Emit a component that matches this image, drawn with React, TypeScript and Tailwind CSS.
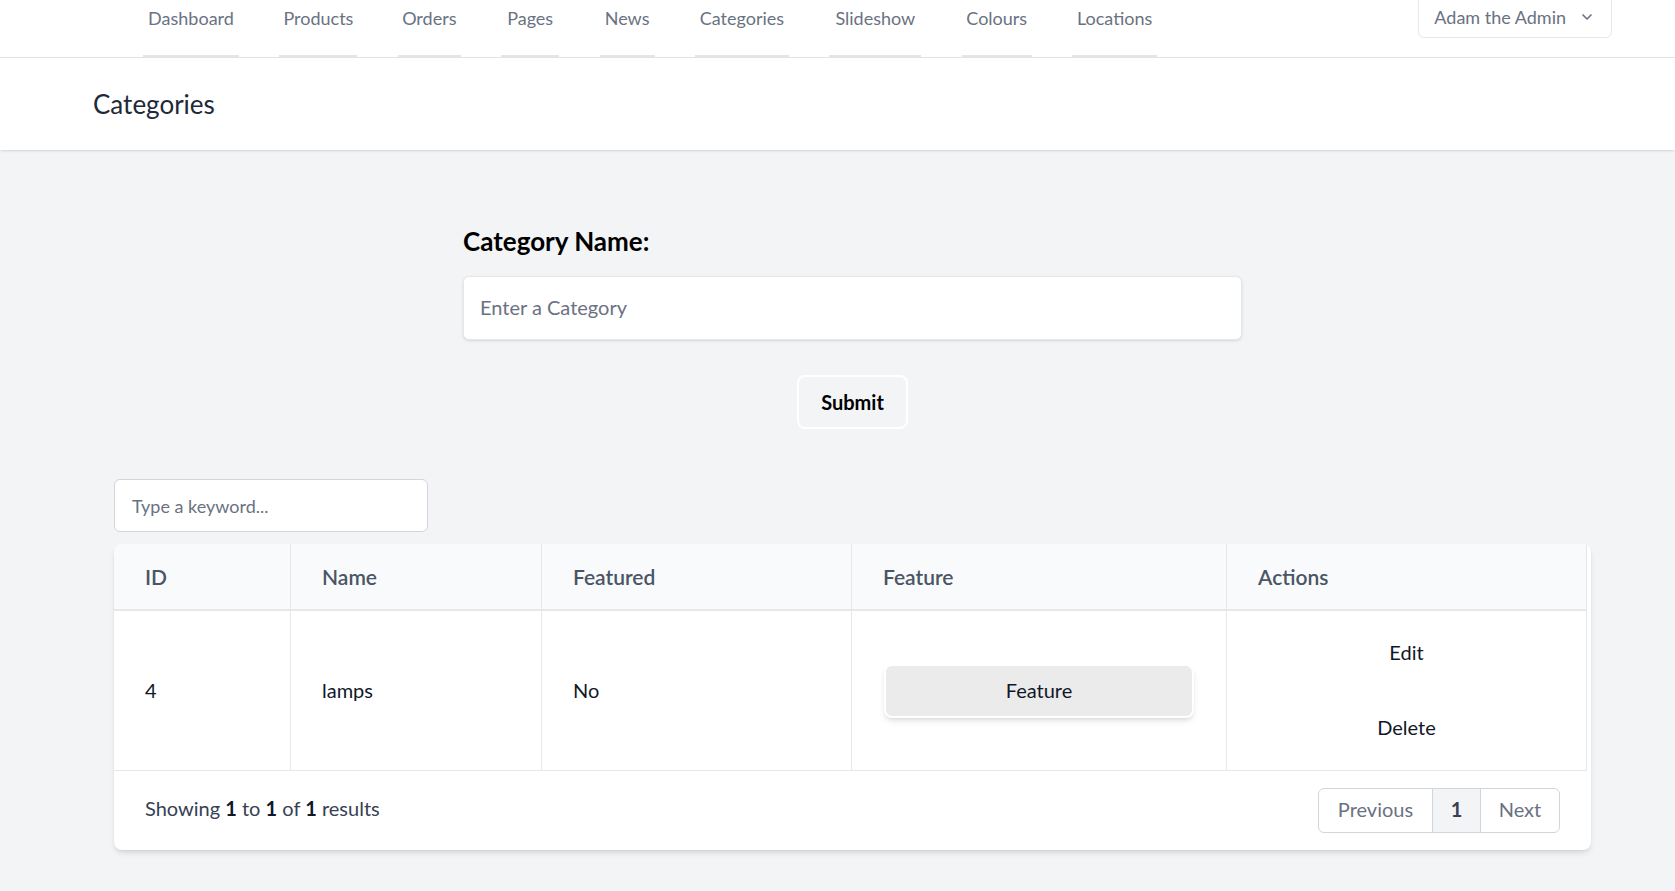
import React from 'react';
import { ChevronDown } from 'lucide-react';

const navItems = [
  { name: 'Dashboard', width: 'w-[96px]' },
  { name: 'Products', width: 'w-[78px]' },
  { name: 'Orders', width: 'w-[63px]' },
  { name: 'Pages', width: 'w-[58px]' },
  { name: 'News', width: 'w-[55px]' },
  { name: 'Categories', width: 'w-[94px]' },
  { name: 'Slideshow', width: 'w-[92px]' },
  { name: 'Colours', width: 'w-[70px]' },
  { name: 'Locations', width: 'w-[85px]' },
];

const TopNav = () => (
  <nav className="flex h-[58px] border-b border-gray-200 bg-white">
    <div className="flex gap-[40.4px] pl-[143px]">
      {navItems.map(({ name, width }) => (
        <a
          key={name}
          href="#"
          className={`${width} flex h-full justify-center border-b-2 border-[#e5e5e5] pt-[5px] text-[18px] leading-[27px] text-gray-500`}
        >
          {name}
        </a>
      ))}
    </div>
    <div className="ml-auto mr-[63px]">
      <button className="-mt-[8px] flex h-[46px] items-center gap-[13px] rounded-md border border-gray-200 bg-white pl-[15px] pr-[16px] pt-[4px] text-[18px] text-gray-500">
        Adam the Admin
        <ChevronDown className="h-[16px] w-[16px]" strokeWidth={2.5} />
      </button>
    </div>
  </nav>
);

const Header = () => (
  <header className="flex h-[92px] items-center bg-white pl-[93px] shadow">
    <h2 className="text-[26px] text-gray-800">Categories</h2>
  </header>
);

const CategoryForm = () => (
  <form className="mx-auto w-[779px]">
    <label className="mt-[76px] block text-[26px] font-bold leading-[30px] text-black">Category Name:</label>
    <input
      type="text"
      placeholder="Enter a Category"
      className="mt-[20px] block h-[64px] w-full rounded-md border border-gray-200 bg-white px-[16px] pb-[3px] text-[20px] shadow-sm placeholder:text-gray-500 focus:outline-none"
    />
    <button
      type="button"
      className="mx-auto mt-[35px] block h-[54px] w-[111px] rounded-lg border-2 border-white bg-[#f3f4f6] text-[20px] font-bold text-black"
    >
      Submit
    </button>
  </form>
);

const CategoryTable = () => {
  const cols = 'grid grid-cols-[177px_251px_310px_375px_1fr]';
  const heads = ['ID', 'Name', 'Featured', 'Feature', 'Actions'];

  return (
    <div className="mx-auto w-[1477px]">
      <input
        type="text"
        placeholder="Type a keyword..."
        className="mt-[50px] block h-[53px] w-[314px] rounded-md border border-gray-300 bg-white px-[17px] text-[18px] placeholder:text-gray-500 focus:outline-none"
      />

      <div className="mt-[12px] overflow-hidden rounded-lg bg-white shadow-md">
        <div className="w-[1473px] border-r border-gray-200">
          <div className={`${cols} h-[67px] border-b-2 border-gray-200 bg-gray-50`}>
            {heads.map((h, i) => (
              <div
                key={h}
                className={`flex items-center px-[31px] text-[21px] font-semibold text-gray-600 ${i < 4 ? 'border-r border-gray-200' : ''}`}
              >
                {h}
              </div>
            ))}
          </div>

          <div className={`${cols} h-[160px] border-b border-gray-200 text-[20px] text-gray-900`}>
            <div className="flex items-center border-r border-gray-200 px-[31px] pb-[2px]">4</div>
            <div className="flex items-center border-r border-gray-200 px-[31px] pb-[2px]">lamps</div>
            <div className="flex items-center border-r border-gray-200 px-[31px] pb-[2px]">No</div>
            <div className="flex items-center border-r border-gray-200 px-[32px]">
              <button className="h-[54px] w-full rounded-lg border-2 border-white bg-[#ebebeb] pb-[2px] text-[20px] text-gray-900 shadow-md">
                Feature
              </button>
            </div>
            <div className="flex flex-col items-center justify-center gap-[46px] pb-[2px]">
              <a href="#" className="leading-[29px]">Edit</a>
              <a href="#" className="leading-[29px]">Delete</a>
            </div>
          </div>
        </div>

        <div className="flex h-[79px] items-center justify-between px-[31px]">
          <p className="mb-[5px] text-[20px] text-gray-700">
            Showing <span className="font-bold text-gray-900">1</span> to{' '}
            <span className="font-bold text-gray-900">1</span> of{' '}
            <span className="font-bold text-gray-900">1</span> results
          </p>
          <div className="flex h-[45px] overflow-hidden rounded-md border border-gray-300 text-[20px]">
            <span className="flex w-[113px] items-center justify-center pb-[4px] text-gray-500">Previous</span>
            <span className="flex w-[49px] items-center justify-center border-x border-gray-300 bg-gray-100 pb-[4px] font-bold text-gray-700">1</span>
            <span className="flex w-[78px] items-center justify-center pb-[4px] text-gray-500">Next</span>
          </div>
        </div>
      </div>
    </div>
  );
};

export default function App() {
  return (
    <div className="min-h-screen bg-[#f3f4f6] font-['Lato','Noto_Sans',sans-serif]">
      <TopNav />
      <Header />
      <main className="pb-10 pl-[30px]">
        <CategoryForm />
        <CategoryTable />
      </main>
    </div>
  );
}
